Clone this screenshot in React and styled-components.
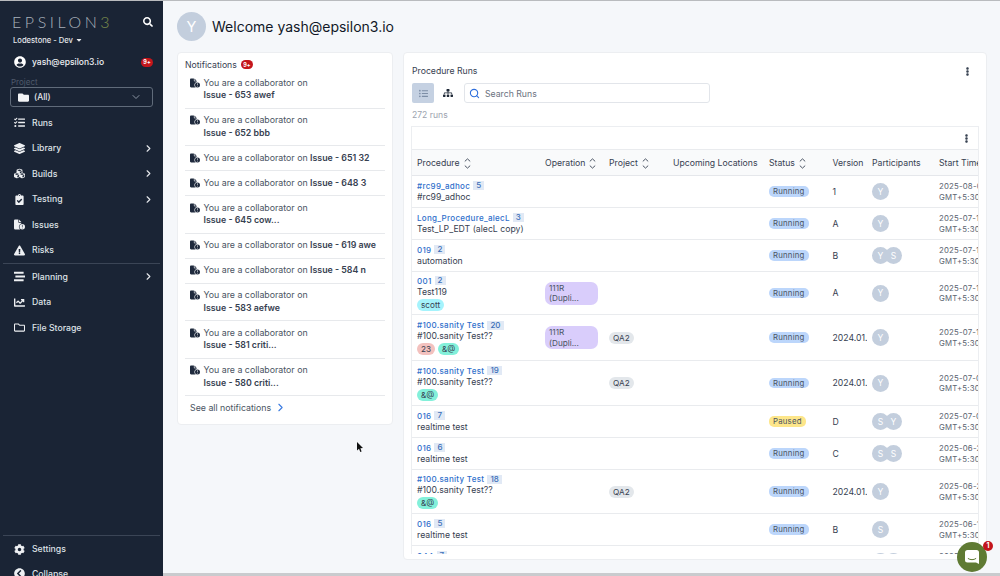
import React from 'react';
import styled, { createGlobalStyle } from 'styled-components';
import {
  FaUserCircle, FaFolder, FaTasks, FaLayerGroup, FaCubes, FaClipboardCheck, FaExclamationTriangle,
  FaStream, FaChartLine, FaRegFolder, FaCog, FaChevronCircleLeft, FaSearch, FaCaretDown,
  FaEllipsisV, FaSitemap, FaListUl,
} from 'react-icons/fa';
import { FaFileCircleExclamation } from 'react-icons/fa6';
import { ChevronRight, ChevronDown, Search } from 'lucide-react';

const Global = createGlobalStyle`
  html, body { margin: 0; padding: 0; height: 576px; overflow: hidden; background: #f5f7fa; }
  body { font-family: Inter, "Noto Sans", sans-serif; color: #374151; }
  * { box-sizing: border-box; }
`;

const Page = styled.div`
  width: 1000px; height: 576px; display: flex; overflow: hidden; border-top: 1px solid #b9bbbe; position: relative;
`;
const Sidebar = styled.aside`
  width: 163px; flex: none; height: 575px; background: #1a2435; color: #e5e7eb;
  display: flex; flex-direction: column; overflow: hidden;
`;
const Brand = styled.div`
  display: flex; align-items: center; justify-content: space-between; padding: 11px 10px 0 12px; height: 31px;
`;
const Logo = styled.span`
  font-size: 16px; font-weight: 300; letter-spacing: 3.55px; color: #a8b0ba; line-height: 16px; white-space: nowrap;
  font-family: Lato, Inter, sans-serif;
  em { font-style: normal; color: #7a8c4c; }
`;
const Org = styled.div`
  display: flex; align-items: center; gap: 2px; padding: 2px 13px 0; height: 14px; font-size: 7.6px; font-weight: 500; color: #e5e7eb;
`;
const UserRow = styled.div`
  display: flex; align-items: center; padding: 0 10px 0 14px; margin-top: 8px; height: 16px; font-size: 8.5px; font-weight: 500; gap: 6px; color: #eef0f3;
  span { flex: 1; }
`;
const Badge = styled.b`
  display: inline-flex; align-items: center; justify-content: center; width: 12px; height: 9px; border-radius: 4.5px;
  background: #c4161c; color: #fff; font-size: 5.5px; font-weight: 700;
`;
const ProjectLabel = styled.div`
  font-size: 8px; color: #4f5a6b; padding: 7px 0 0 11px; height: 17px; line-height: 10px;
`;
const ProjectSelect = styled.div`
  margin: 0 10px; height: 20px; border: 1px solid #606b7a; border-radius: 3px; display: flex; align-items: center;
  padding: 0 10px 0 7px; gap: 5px; font-size: 8.5px; font-weight: 500; color: #e5e7eb;
  span { flex: 1; }
`;
const Nav = styled.nav`
  display: flex; flex-direction: column; margin-top: ${p => p.$top || 0}px;
`;
const NavItem = styled.div`
  height: 25.5px; display: flex; align-items: center; padding: 0 9px 0 13px; font-size: 8.7px; font-weight: 500; color: #dfe2e7;
  span { flex: 1; margin-left: 7px; }
`;
const IconSlot = styled.i`
  width: 12px; height: 12px; display: inline-flex; align-items: center; justify-content: center; flex: none; color: #eef0f3;
`;
const SideDivider = styled.div`
  height: 1px; background: #3b4556; margin: 0 3px; flex: none;
`;
const SideSpacer = styled.div`flex: 1;`;
const SideFoot = styled.div`
  display: flex; flex-direction: column; flex: none; height: 40px; padding-top: 1px;
  ${NavItem} { height: 24.5px; flex: none; }
`;

const Main = styled.main`
  flex: 1; min-width: 0; height: 575px; display: flex; flex-direction: column; padding: 11px 13px 0 14px;
  border-bottom: 3px solid #c9cbce; position: relative;
`;
const Header = styled.header`
  display: flex; align-items: center; gap: 6px; height: 29px; flex: none;
`;
const Avatar = styled.div`
  width: ${p => p.$size}px; height: ${p => p.$size}px; border-radius: 50%; background: #c3cedd; color: #fff; flex: none;
  display: inline-flex; align-items: center; justify-content: center; font-size: ${p => p.$size * 0.5}px; font-weight: 400;
  & + & { margin-left: -4px; }
`;
const Title = styled.h1`
  margin: 0; font-size: 14px; font-weight: 400; color: #111827;
`;
const Columns = styled.div`
  display: flex; gap: 10px; margin-top: 11px; align-items: flex-start; min-height: 0;
`;
const Card = styled.section`
  background: #fff; border: 1px solid #eceef1; border-radius: 4px;
`;
const NoteCard = styled(Card)`
  width: 216px; flex: none; height: 373px; padding: 5px 7px 0 7px;
`;
const NoteTitle = styled.div`
  font-size: 8.7px; color: #374151; height: 13px; display: flex; align-items: center; gap: 4px;
`;
const NoteItem = styled.div`
  display: flex; gap: 3.5px; padding: 5.5px 0 6px 5px; line-height: 12.5px; font-size: 8.8px; color: #4b5563;
  border-bottom: 1px solid #e7e9ec; min-height: 25px;
  svg { flex: none; margin-top: 1px; color: #1f2a3d; }
  b { font-weight: 600; color: #374151; }
  &:last-of-type { border-bottom: 2px solid #eef1f3; }
`;
const SeeAll = styled.div`
  display: flex; align-items: center; gap: 3px; padding: 5px 0 0 5px; font-size: 8.8px; color: #4b5563;
  svg { color: #3b7be0; }
`;
const RunsCard = styled(Card)`
  width: 584px; flex: none; height: 508px; padding: 0 7px 0 7px; display: flex; flex-direction: column; overflow: hidden;
`;
const RunsHead = styled.div`
  display: flex; align-items: center; justify-content: space-between; height: 30px; flex: none; padding: 6px 7px 0 1px;
  font-size: 8.7px; color: #374151;
  svg { color: #374151; }
`;
const Toolbar = styled.div`
  display: flex; align-items: center; height: 20px; flex: none; padding-left: 1px;
`;
const ViewBtn = styled.div`
  width: 22px; height: 20px; border-radius: 2px; display: flex; align-items: center; justify-content: center; margin-right: 3px;
  background: ${p => (p.$active ? '#c5d1e2' : 'transparent')}; color: ${p => (p.$active ? '#7d8ea6' : '#1f2937')};
`;
const SearchBox = styled.div`
  margin-left: 2px; width: 246px; height: 20px; border: 1px solid #e2e5ea; border-radius: 3px; display: flex; align-items: center;
  padding: 1px 0 0 4px; gap: 5px; font-size: 8.7px; color: #6b7280; svg { color: #2f6fdc; }
`;
const Count = styled.div`
  font-size: 8.6px; color: #9ca3af; height: 23px; flex: none; padding: 1px 0 0 1px; display: flex; align-items: center;
`;
const Table = styled.div`
  flex: 1; min-height: 0; border: 1px solid #eceef1; border-bottom: none; overflow: hidden; width: 568px; margin-bottom: 5px;
`;
const TableTools = styled.div`
  height: 23px; display: flex; align-items: center; justify-content: flex-end; padding-right: 7px; border-bottom: 1px solid #e9ebee;
  svg { color: #374151; }
`;
const grid = '128px 64px 64px 96px 63.5px 39.5px 67px 100px';
const HeadRow = styled.div`
  display: grid; grid-template-columns: ${grid}; height: 26px; align-items: center; background: #f9fafb; border-bottom: 1.5px solid #e5e7eb;
  width: 622px; padding-top: 1px;
`;
const HeadCell = styled.div`
  padding-left: 5px; font-size: 8.7px; font-weight: 400; color: #374151; display: flex; align-items: center; gap: 4px; white-space: nowrap;
`;
const Row = styled.div`
  display: grid; grid-template-columns: ${grid}; align-items: center; border-bottom: 1.5px solid #e9ebee; width: 622px;
  min-height: ${p => p.$h}px; height: ${p => p.$h}px;
`;
const Cell = styled.div`
  padding-left: 5px; font-size: 8.7px; color: #374151; white-space: nowrap; overflow: hidden; display: flex; align-items: center;
`;
const ProcCell = styled.div`
  padding-left: 5px; display: flex; flex-direction: column; align-items: flex-start;
`;
const ProcLink = styled.div`
  display: flex; align-items: center; gap: 3px; font-size: 8px; color: #2f6fcb; font-weight: 500; letter-spacing: .3px; line-height: 10px; height: 10px;
`;
const RunNum = styled.span`
  background: #e1e9f5; font-size: 8px; padding: 0 3px; line-height: 9px; letter-spacing: 0; color: #3b6fb8;
`;
const ProcName = styled.div`
  font-size: 8.7px; color: #374151; line-height: 11px; white-space: nowrap; margin-top: 1px;
`;
const TagRow = styled.div`
  display: flex; gap: 3px; margin-top: 1px;
`;
const Tag = styled.span`
  height: 12px; border-radius: 6px; padding: 0 4px; background: ${p => p.$bg}; font-size: 8.2px; line-height: 12px; color: #374151;
`;
const OpPill = styled.div`
  background: #d9cdfb; border-radius: 7px; width: 53px; height: 23px; padding: 1px 4px; font-size: 8.2px; line-height: 10.5px; color: #4b5563;
`;
const ProjPill = styled.span`
  background: #e3e7eb; border-radius: 6px; height: 12px; padding: 0 4px; font-size: 8.2px; line-height: 12px; color: #374151;
`;
const Status = styled.span`
  height: 10.5px; border-radius: 5px; padding: 0 4px; font-size: 7.8px; line-height: 10.5px; color: #4b5563;
  letter-spacing: .2px; background: ${p => (p.$paused ? '#fde68a' : '#bcd6fb')};
`;
const Times = styled.div`
  font-size: 7.8px; line-height: 10.5px; letter-spacing: .2px; color: #5b6470;
`;
const Chat = styled.div`
  position: absolute; left: 957px; top: 541px; width: 30px; height: 30px; border-radius: 50%; background: #5f7a33;
  display: flex; align-items: center; justify-content: center;
`;
const ChatBadge = styled.span`
  position: absolute; top: -1px; right: -6px; width: 10px; height: 10px; border-radius: 50%; background: #c3141b; color: #fff;
  font-size: 7px; font-weight: 700; line-height: 10px; text-align: center;
`;
const Cursor = styled.svg`
  position: absolute; left: 357px; top: 441px;
`;

const SortIcon = () => (
  <svg width="7" height="11" viewBox="0 0 7 11" fill="none" stroke="#374151" strokeWidth="0.9">
    <path d="M.8 3.4 3.5 .9l2.7 2.5M.8 7.6l2.7 2.5 2.7-2.5" />
  </svg>
);
const ChatIcon = () => (
  <svg width="14" height="14" viewBox="0 0 14 14">
    <path fill="#fff" d="M2.5 0h9A2.5 2.5 0 0 1 14 2.5V14l-3-1.6H2.5A2.5 2.5 0 0 1 0 9.9V2.5A2.5 2.5 0 0 1 2.5 0z" />
    <path fill="none" stroke="#5f7a33" strokeWidth="1" strokeLinecap="round" d="M3.2 8.6c2.2 1.5 5.4 1.5 7.6 0" />
  </svg>
);

const navTop = [
  [FaTasks, 'Runs', false], [FaLayerGroup, 'Library', true], [FaCubes, 'Builds', true],
  [FaClipboardCheck, 'Testing', true], [FaFileCircleExclamation, 'Issues', false], [FaExclamationTriangle, 'Risks', false],
];
const navBottom = [[FaStream, 'Planning', true], [FaChartLine, 'Data', false], [FaRegFolder, 'File Storage', false]];

const notes = [
  ['Issue - 653 awef', 1], ['Issue - 652 bbb', 1], ['Issue - 651 32', 0], ['Issue - 648 3', 0], ['Issue - 645 cow...', 1],
  ['Issue - 619 awe', 0], ['Issue - 584 n', 0], ['Issue - 583 aefwe', 1], ['Issue - 581 criti...', 1], ['Issue - 580 criti...', 1],
];

const sanity = '#100.sanity Test';
const sname = '#100.sanity Test??';
const mint = '#83f0da';
const rows = [
  { h: 32, link: '#rc99_adhoc', n: 5, name: '#rc99_adhoc', v: '1', p: ['Y'], t: '2025-08-05' },
  { h: 32, link: 'Long_Procedure_alecL', n: 3, name: 'Test_LP_EDT (alecL copy)', v: 'A', p: ['Y'], t: '2025-07-14' },
  { h: 32, link: '019', n: 2, name: 'automation', v: 'B', p: ['Y', 'S'], t: '2025-07-14' },
  { h: 43, link: '001', n: 2, name: 'Test119', tags: [['scott', '#a5f3fc']], op: 1, v: 'A', p: ['Y'], t: '2025-07-11' },
  { h: 46, link: sanity, n: 20, name: sname, tags: [['23', '#f3c1be'], ['&@', mint]], op: 1, proj: 1, v: '2024.01.', p: ['Y'], t: '2025-07-11' },
  { h: 45, link: sanity, n: 19, name: sname, tags: [['&@', mint]], proj: 1, v: '2024.01.', p: ['Y'], t: '2025-07-03' },
  { h: 32, link: '016', n: 7, name: 'realtime test', paused: 1, v: 'D', p: ['S', 'Y'], t: '2025-07-01' },
  { h: 32, link: '016', n: 6, name: 'realtime test', v: 'C', p: ['S', 'S'], t: '2025-06-27' },
  { h: 44, link: sanity, n: 18, name: sname, tags: [['&@', mint]], proj: 1, v: '2024.01.', p: ['Y'], t: '2025-06-23' },
  { h: 32, link: '016', n: 5, name: 'realtime test', v: 'B', p: ['S'], t: '2025-06-18' },
  { h: 32, link: '044', n: 7, name: 'realtime test', v: 'A', p: ['S', 'S'], t: '2025-06-16' },
];

const heads = [
  ['Procedure', 1], ['Operation', 1], ['Project', 1], ['Upcoming Locations', 0], ['Status', 1], ['Version', 0], ['Participants', 0], ['Start Time', 0],
];

export default function App() {
  return (
    <>
      <Global />
      <Page>
        <Sidebar>
          <Brand>
            <Logo>EPSILON<em>3</em></Logo>
            <FaSearch size={10} color="#fff" />
          </Brand>
          <Org>Lodestone - Dev <FaCaretDown size={8} /></Org>
          <UserRow>
            <FaUserCircle size={12} color="#fff" />
            <span>yash@epsilon3.io</span>
            <Badge>9+</Badge>
          </UserRow>
          <ProjectLabel>Project</ProjectLabel>
          <ProjectSelect>
            <FaFolder size={11} color="#f3f4f6" />
            <span>(All)</span>
            <ChevronDown size={12} color="#8a94a3" />
          </ProjectSelect>
          <Nav $top={3}>
            {navTop.map(([Icon, label, more]) => (
              <NavItem key={label}>
                <IconSlot><Icon size={11} /></IconSlot>
                <span>{label}</span>
                {more && <ChevronRight size={11} color="#e5e7eb" strokeWidth={2.5} />}
              </NavItem>
            ))}
          </Nav>
          <SideDivider />
          <Nav>
            {navBottom.map(([Icon, label, more]) => (
              <NavItem key={label}>
                <IconSlot><Icon size={11} /></IconSlot>
                <span>{label}</span>
                {more && <ChevronRight size={11} color="#e5e7eb" strokeWidth={2.5} />}
              </NavItem>
            ))}
          </Nav>
          <SideSpacer />
          <SideDivider />
          <SideFoot>
            <NavItem><IconSlot><FaCog size={11} /></IconSlot><span>Settings</span></NavItem>
            <NavItem><IconSlot><FaChevronCircleLeft size={11} /></IconSlot><span>Collapse</span></NavItem>
          </SideFoot>
        </Sidebar>
        <Main>
          <Header>
            <Avatar $size={29}>Y</Avatar>
            <Title>Welcome yash@epsilon3.io</Title>
          </Header>
          <Columns>
            <NoteCard>
              <NoteTitle>Notifications <Badge>9+</Badge></NoteTitle>
              {notes.map(([text, wrap]) => (
                <NoteItem key={text}>
                  <FaFileCircleExclamation size={10} />
                  <div>You are a collaborator on{wrap ? <br /> : ' '}<b>{text}</b></div>
                </NoteItem>
              ))}
              <SeeAll>See all notifications <ChevronRight size={13} /></SeeAll>
            </NoteCard>
            <RunsCard>
              <RunsHead>
                Procedure Runs
                <FaEllipsisV size={9} />
              </RunsHead>
              <Toolbar>
                <ViewBtn $active><FaListUl size={9} /></ViewBtn>
                <ViewBtn><FaSitemap size={10} /></ViewBtn>
                <SearchBox><Search size={11} strokeWidth={2.4} />Search Runs</SearchBox>
              </Toolbar>
              <Count>272 runs</Count>
              <Table>
                <TableTools><FaEllipsisV size={9} /></TableTools>
                <HeadRow>
                  {heads.map(([h, sort]) => (
                    <HeadCell key={h}>{h}{sort ? <SortIcon /> : null}</HeadCell>
                  ))}
                </HeadRow>
                {rows.map((r, i) => (
                  <Row key={i} $h={r.h}>
                    <ProcCell>
                      <ProcLink>{r.link} <RunNum>{r.n}</RunNum></ProcLink>
                      <ProcName>{r.name}</ProcName>
                      {r.tags && (
                        <TagRow>{r.tags.map(([t, bg]) => <Tag key={t} $bg={bg}>{t}</Tag>)}</TagRow>
                      )}
                    </ProcCell>
                    <Cell>{r.op ? <OpPill>111R<br />(Dupli...</OpPill> : null}</Cell>
                    <Cell>{r.proj ? <ProjPill>QA2</ProjPill> : null}</Cell>
                    <Cell />
                    <Cell><Status $paused={r.paused}>{r.paused ? 'Paused' : 'Running'}</Status></Cell>
                    <Cell>{r.v}</Cell>
                    <Cell>{r.p.map((l, k) => <Avatar key={k} $size={17}>{l}</Avatar>)}</Cell>
                    <Cell><Times>{r.t}<br />GMT+5:30</Times></Cell>
                  </Row>
                ))}
              </Table>
            </RunsCard>
          </Columns>
        </Main>
        <Cursor width="7" height="11" viewBox="0 0 7 11">
          <path d="M0 0v8.5l2-1.8 1.3 3.3 1.3-.6L3.4 6.2 6 6z" fill="#111" />
        </Cursor>
        <Chat><ChatIcon /><ChatBadge>1</ChatBadge></Chat>
      </Page>
    </>
  );
}
